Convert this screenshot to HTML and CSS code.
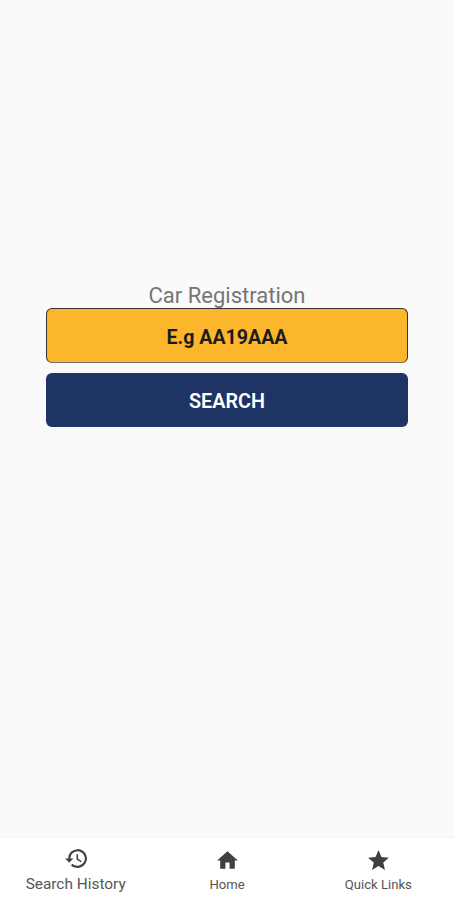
FILE: index.html
```html
<!DOCTYPE html>
<html lang="en">
<head>
    <meta charset="UTF-8">
    <meta name="viewport" content="width=device-width, initial-scale=1.0">
    <title>Car Registration</title>
    <link rel="stylesheet" href="styles.css">
</head>
<body>

    <!-- Search form -->
    <main class="content">
        <form class="search-form">
            <label for="registration">Car Registration</label>
            <input type="text" id="registration" placeholder="E.g AA19AAA">
            <button type="submit">SEARCH</button>
        </form>
    </main>

    <!-- Bottom navigation -->
    <nav class="bottom-nav">
        <a href="#history" class="active">
            <svg viewBox="0 0 24 24"><path d="M13 3a9 9 0 0 0-9 9H1l3.89 3.89.07.14L9 12H6a7 7 0 1 1 2.06 4.94l-1.42 1.42A9 9 0 1 0 13 3zm-1 5v5l4.28 2.54.72-1.21-3.5-2.08V8H12z"/></svg>
            <span>Search History</span>
        </a>
        <a href="#home">
            <svg viewBox="0 0 24 24"><path d="M10 20v-6h4v6h5v-8h3L12 3 2 12h3v8z"/></svg>
            <span>Home</span>
        </a>
        <a href="#links">
            <svg viewBox="0 0 24 24"><path d="M12 17.27 18.18 21l-1.64-7.03L22 9.24l-7.19-.61L12 2 9.19 8.63 2 9.24l5.46 4.73L5.82 21z"/></svg>
            <span>Quick Links</span>
        </a>
    </nav>

</body>
</html>
```
FILE: styles.css
```css
body {
    font-family: Roboto, sans-serif;
    background-color: #fafafa;
    margin: 0;
    height: 100vh;
    display: flex;
    flex-direction: column;
}

.content {
    flex: 1;
    padding: 283px 46px 0;
}

/* Search form */
.search-form {
    display: flex;
    flex-direction: column;
    text-align: center;
}

.search-form label {
    font-size: 22px;
    line-height: 25px;
    color: #757575;
}

.search-form input,
.search-form button {
    font-family: inherit;
    height: 55px;
    width: 100%;
    box-sizing: border-box;
    border-radius: 6px;
    text-align: center;
    padding: 0;
}

.search-form input {
    font-size: 19.6px;
    font-weight: 700;
    padding-top: 3px;
    background-color: #fbb62b;
    border: 1px solid #333;
    border-bottom-color: #77705f;
    outline: none;
}

.search-form input::placeholder {
    color: #1c1c1c;
}

.search-form button {
    font-weight: 600;
    font-size: 19.8px;
    margin-top: 10px;
    height: 54px;
    padding-top: 2px;
    background-color: #1d3464;
    border: none;
    color: white;
    cursor: pointer;
}

/* Bottom navigation */
.bottom-nav {
    display: flex;
    height: 62px;
    background-color: white;
    border-top: 1px solid #f2f2f2;
}

.bottom-nav a {
    flex: 1;
    display: flex;
    flex-direction: column;
    align-items: center;
    padding-top: 10px;
    color: #555;
    font-size: 13.1px;
    text-decoration: none;
}

.bottom-nav svg {
    width: 25px;
    height: 25px;
    margin-left: 1px;
    fill: #404040;
}

.bottom-nav span {
    line-height: 18px;
    margin-top: 3px;
}

.bottom-nav .active {
    padding-top: 8px;
    font-size: 15.4px;
}

.bottom-nav .active span {
    margin-top: 4px;
}
```
